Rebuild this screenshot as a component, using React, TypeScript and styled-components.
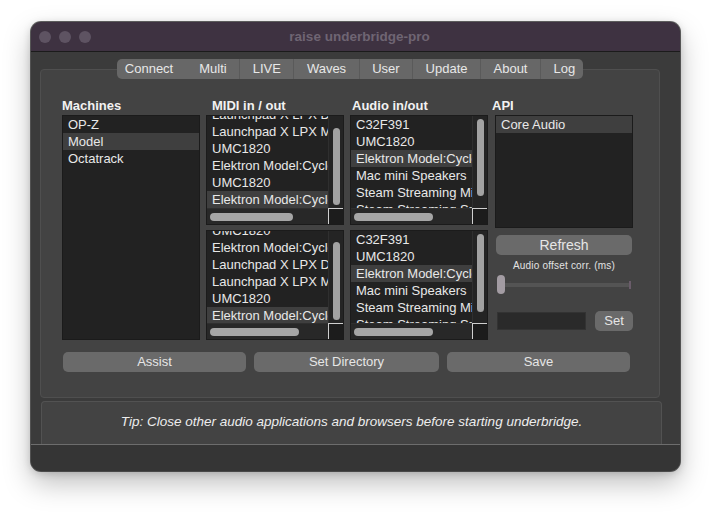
import React from "react";
import styled, { createGlobalStyle } from "styled-components";

const GlobalStyle = createGlobalStyle`
  html, body { margin: 0; padding: 0; background: #ffffff; }
  body { font-family: "Liberation Sans", Arial, Helvetica, sans-serif; }
  * { box-sizing: border-box; }
`;

const Page = styled.div`
  width: 714px;
  height: 516px;
  padding: 22px 0 0 31px;
  background: #ffffff;
`;

const Window = styled.div`
  width: 649px;
  height: 449px;
  border-radius: 10px;
  overflow: hidden;
  display: flex;
  flex-direction: column;
  background: #3b3b3b;
  box-shadow: 0 0 0 1px rgba(0, 0, 0, 0.6), 0 12px 28px rgba(0, 0, 0, 0.26),
    0 2px 8px rgba(0, 0, 0, 0.18);
`;

const TitleBar = styled.div`
  flex: none;
  height: 30px;
  display: grid;
  grid-template-columns: 1fr auto 1fr;
  align-items: center;
  padding-left: 8px;
  background: #3e3241;
  border-bottom: 1px solid #1b1b1b;
`;

const Lights = styled.div`
  display: flex;
  gap: 8px;
`;

const Light = styled.span`
  width: 12px;
  height: 12px;
  border-radius: 50%;
  background: #5e5362;
`;

const Title = styled.div`
  font-size: 13.5px;
  font-weight: bold;
  color: #6f6573;
`;

const Body = styled.div`
  flex: 1;
  display: flex;
  flex-direction: column;
  padding: 7px 20px 0 9px;
`;

const TabArea = styled.div`
  display: flex;
  flex-direction: column;
  align-items: center;
`;

const TabBar = styled.div`
  display: flex;
  height: 20px;
  border-radius: 5px;
  background: #676767;
  position: relative;
  z-index: 1;
`;

const Tab = styled.div<{ $first?: boolean; $last?: boolean }>`
  padding: 0 ${(p) => (p.$last ? 8 : 12.5)}px 0 ${(p) => (p.$first ? 8 : 12.5)}px;
  line-height: 20px;
  font-size: 13px;
  color: #e8e8e8;
  border-left: ${(p) => (p.$first ? "none" : "1px solid #5a5a5a")};
  &:nth-child(2) {
    border-left-color: #676767;
  }
`;

const Pane = styled.div`
  margin-top: -10px;
  width: 100%;
  height: 329px;
  background: #434343;
  border: 1px solid #4f4f4f;
  border-radius: 4px;
  padding: 27px 25px 0 21px;
  display: flex;
  flex-direction: column;
  gap: 12px;
`;

const Columns = styled.div`
  display: grid;
  grid-template-columns: 138px 138px 138px 139px;
  column-gap: 6px;
`;

const Column = styled.div<{ $pad?: number }>`
  display: flex;
  flex-direction: column;
  padding-left: ${(p) => p.$pad ?? 0}px;
`;

const Heading = styled.div<{ $indent: number }>`
  height: 17px;
  line-height: 17px;
  margin-bottom: 1px;
  margin-left: ${(p) => p.$indent}px;
  font-size: 13px;
  font-weight: bold;
  color: #f2f2f2;
  white-space: nowrap;
`;

const Stack = styled.div`
  display: flex;
  flex-direction: column;
  gap: 5px;
`;

const ListBox = styled.div<{ $h: number }>`
  height: ${(p) => p.$h}px;
  background: #222222;
  border: 1px solid #1b1b1b;
  overflow: hidden;
`;

const ScrollBox = styled.div<{ $h: number }>`
  height: ${(p) => p.$h}px;
  background: #222222;
  border: 1px solid #1b1b1b;
  display: grid;
  grid-template-columns: 1fr 15px;
  grid-template-rows: 1fr 16px;
  overflow: hidden;
`;

const Viewport = styled.div`
  overflow: hidden;
  min-width: 0;
`;

const Rows = styled.div<{ $offset: number }>`
  margin-top: -${(p) => p.$offset}px;
`;

const Row = styled.div<{ $sel?: boolean }>`
  height: 17px;
  line-height: 17px;
  padding-left: 5px;
  font-size: 13px;
  color: #e8e8e8;
  white-space: nowrap;
  background: ${(p) => (p.$sel ? "#3f3f3f" : "transparent")};
`;

const VTrack = styled.div`
  background: #242424;
  border-left: 1px solid #2f2f2f;
  display: flex;
  flex-direction: column;
  align-items: center;
`;

const VThumb = styled.div<{ $start: number; $size: number }>`
  width: 7px;
  margin-top: ${(p) => p.$start}px;
  height: ${(p) => p.$size}px;
  border-radius: 4px;
  background: #a2a2a2;
`;

const HTrack = styled.div`
  background: #282828;
  border-top: 1px solid #2f2f2f;
  display: flex;
  align-items: center;
`;

const HThumb = styled.div<{ $start: number; $size: number }>`
  height: 8px;
  margin-left: ${(p) => p.$start}px;
  width: ${(p) => p.$size}px;
  border-radius: 4px;
  background: #a6a6a6;
`;

const Corner = styled.div`
  background: #1c1c1c;
  border-top: 1px solid #cfcfcf;
  border-left: 1px solid #cfcfcf;
`;

const Button = styled.div<{ $w: number; $h?: number }>`
  width: ${(p) => p.$w}px;
  height: ${(p) => p.$h ?? 20}px;
  line-height: ${(p) => p.$h ?? 20}px;
  border-radius: 5px;
  background: #6a6a6a;
  color: #e6e6e6;
  font-size: 13px;
  text-align: center;
  flex: none;
`;

const RefreshButton = styled(Button)`
  margin-top: 7px;
  margin-left: 1px;
  font-size: 14px;
`;

const OffsetLabel = styled.div`
  margin-top: 5px;
  height: 12px;
  line-height: 12px;
  font-size: 10px;
  letter-spacing: 0.2px;
  color: #e2e2e2;
  text-align: center;
`;

const Slider = styled.div`
  margin-top: 3px;
  height: 19px;
  padding-left: 2px;
  display: flex;
  align-items: center;
`;

const SliderHandle = styled.div`
  width: 8px;
  height: 19px;
  border-radius: 4px;
  background: #a39ca3;
  flex: none;
`;

const SliderTrack = styled.div`
  flex: 1;
  height: 4px;
  background: #545454;
`;

const SliderTick = styled.div`
  width: 2px;
  height: 8px;
  background: #6a5c6a;
  margin-right: 2px;
`;

const EditRow = styled.div`
  margin-top: 17px;
  display: flex;
  align-items: center;
  justify-content: space-between;
  padding-left: 2px;
`;

const LineEdit = styled.div`
  width: 89px;
  height: 18px;
  background: #2a2a2a;
  border: 1px solid #333333;
`;

const ButtonRow = styled.div`
  display: grid;
  grid-template-columns: 183px 185px 183px;
  column-gap: 8px;
  margin-left: 1px;
`;

const TipBox = styled.div`
  flex: 1;
  margin: 3px -2px 0 1px;
  background: #434343;
  border: 1px solid #525252;
  border-bottom: none;
  border-radius: 4px 4px 0 0;
  padding-top: 11px;
  text-align: center;
  font-size: 13.5px;
  font-style: italic;
  line-height: 17px;
  color: #ededed;
`;

const StatusBar = styled.div`
  flex: none;
  height: 27px;
  background: #353535;
  border-top: 1px solid #6d6d6d;
`;

type ListSpec = {
  rows: string[];
  sel: number;
  offset: number;
  v: [number, number];
  h: [number, number];
};

const audioRows = [
  "C32F391",
  "UMC1820",
  "Elektron Model:Cycles",
  "Mac mini Speakers",
  "Steam Streaming Microphone",
  "Steam Streaming Speakers",
];

const midiTop: ListSpec = {
  rows: [
    "Launchpad X LPX DAW",
    "Launchpad X LPX MIDI",
    "UMC1820",
    "Elektron Model:Cycles",
    "UMC1820",
    "Elektron Model:Cycles",
  ],
  sel: 5,
  offset: 10,
  v: [12, 77],
  h: [3, 83],
};

const midiBottom: ListSpec = {
  rows: [
    "UMC1820",
    "Elektron Model:Cycles",
    "Launchpad X LPX DAW",
    "Launchpad X LPX MIDI",
    "UMC1820",
    "Elektron Model:Cycles",
  ],
  sel: 5,
  offset: 9,
  v: [11, 78],
  h: [3, 89],
};

const audioTop: ListSpec = { rows: audioRows, sel: 2, offset: 0, v: [3, 77], h: [3, 79] };
const audioBottom: ListSpec = { rows: audioRows, sel: 2, offset: 0, v: [3, 78], h: [3, 79] };

const ScrollList: React.FC<{ spec: ListSpec }> = ({ spec }) => (
  <ScrollBox $h={110}>
    <Viewport>
      <Rows $offset={spec.offset}>
        {spec.rows.map((r, i) => (
          <Row key={i} $sel={i === spec.sel}>
            {r}
          </Row>
        ))}
      </Rows>
    </Viewport>
    <VTrack>
      <VThumb $start={spec.v[0]} $size={spec.v[1]} />
    </VTrack>
    <HTrack>
      <HThumb $start={spec.h[0]} $size={spec.h[1]} />
    </HTrack>
    <Corner />
  </ScrollBox>
);

const tabs = ["Connect", "Multi", "LIVE", "Waves", "User", "Update", "About", "Log"];

export default function App() {
  return (
    <Page>
      <GlobalStyle />
      <Window>
        <TitleBar>
          <Lights>
            <Light />
            <Light />
            <Light />
          </Lights>
          <Title>raise underbridge-pro</Title>
          <div />
        </TitleBar>
        <Body>
          <TabArea>
            <TabBar>
              {tabs.map((t, i) => (
                <Tab key={t} $first={i === 0} $last={i === tabs.length - 1}>
                  {t}
                </Tab>
              ))}
            </TabBar>
            <Pane>
              <Columns>
                <Column>
                  <Heading $indent={0}>Machines</Heading>
                  <ListBox $h={225}>
                    <Row>OP-Z</Row>
                    <Row $sel>Model</Row>
                    <Row>Octatrack</Row>
                  </ListBox>
                </Column>
                <Column>
                  <Heading $indent={6}>MIDI in / out</Heading>
                  <Stack>
                    <ScrollList spec={midiTop} />
                    <ScrollList spec={midiBottom} />
                  </Stack>
                </Column>
                <Column>
                  <Heading $indent={2}>Audio in/out</Heading>
                  <Stack>
                    <ScrollList spec={audioTop} />
                    <ScrollList spec={audioBottom} />
                  </Stack>
                </Column>
                <Column $pad={1}>
                  <Heading $indent={-3}>API</Heading>
                  <ListBox $h={113}>
                    <Row $sel>Core Audio</Row>
                  </ListBox>
                  <RefreshButton $w={136}>Refresh</RefreshButton>
                  <OffsetLabel>Audio offset corr. (ms)</OffsetLabel>
                  <Slider>
                    <SliderHandle />
                    <SliderTrack />
                    <SliderTick />
                  </Slider>
                  <EditRow>
                    <LineEdit />
                    <Button $w={38}>Set</Button>
                  </EditRow>
                </Column>
              </Columns>
              <ButtonRow>
                <Button $w={183}>Assist</Button>
                <Button $w={185}>Set Directory</Button>
                <Button $w={183}>Save</Button>
              </ButtonRow>
            </Pane>
          </TabArea>
          <TipBox>Tip: Close other audio applications and browsers before starting underbridge.</TipBox>
        </Body>
        <StatusBar />
      </Window>
    </Page>
  );
}
